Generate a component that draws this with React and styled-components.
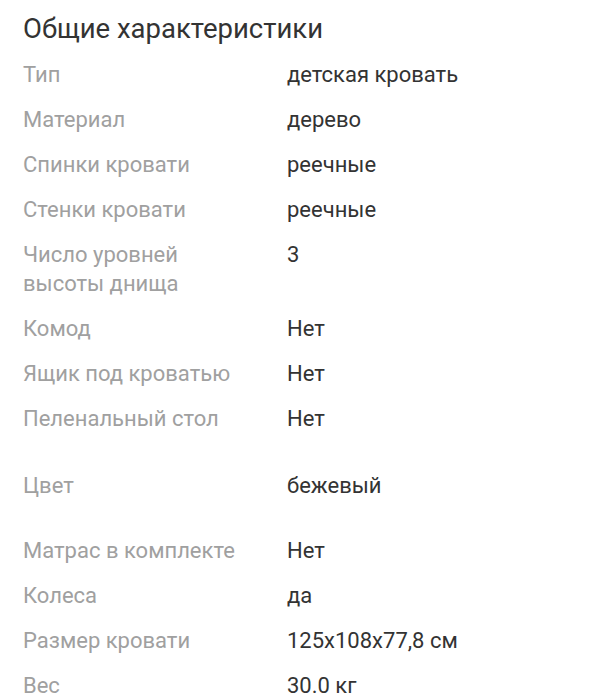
import React from 'react';
import styled, { createGlobalStyle } from 'styled-components';

const GlobalStyle = createGlobalStyle`
  html, body {
    margin: 0;
    padding: 0;
    background: #ffffff;
  }
  body {
    font-family: Roboto, "Noto Sans", "Liberation Sans", sans-serif;
  }
`;

const SpecsWrapper = styled.section`
  padding: 12px 24px 0 23px;
`;

const SpecsTitle = styled.h2`
  margin: 0 0 14px 0;
  font-size: 27.5px;
  line-height: 34px;
  font-weight: 400;
  color: #333333;
`;

const SpecRow = styled.div`
  display: grid;
  grid-template-columns: 220px 1fr;
  column-gap: 44px;
  padding-bottom: 16px;
  margin-top: ${({ spaced }) => spaced ? 22 : 0}px;
  margin-bottom: ${({ spaced }) => spaced ? 20 : 0}px;
  font-size: 22px;
  line-height: 29px;
`;

const SpecLabel = styled.div`
  color: #a0a0a0;
`;

const SpecValue = styled.div`
  color: #333333;
`;

const SPECS = [
  { label: 'Тип', value: 'детская кровать' },
  { label: 'Материал', value: 'дерево' },
  { label: 'Спинки кровати', value: 'реечные' },
  { label: 'Стенки кровати', value: 'реечные' },
  { label: 'Число уровней высоты днища', value: '3' },
  { label: 'Комод', value: 'Нет' },
  { label: 'Ящик под кроватью', value: 'Нет' },
  { label: 'Пеленальный стол', value: 'Нет' },
  { label: 'Цвет', value: 'бежевый', spaced: true },
  { label: 'Матрас в комплекте', value: 'Нет' },
  { label: 'Колеса', value: 'да' },
  { label: 'Размер кровати', value: '125x108x77,8 см' },
  { label: 'Вес', value: '30.0 кг' },
];

const App = () => {
  return (
    <>
      <GlobalStyle />
      <SpecsWrapper>
        <SpecsTitle>Общие характеристики</SpecsTitle>
        {
          SPECS.map(({ label, value, spaced }) => (
            <SpecRow key={label} spaced={spaced}>
              <SpecLabel>{label}</SpecLabel>
              <SpecValue>{value}</SpecValue>
            </SpecRow>
          ))
        }
      </SpecsWrapper>
    </>
  );
};

export default App;
